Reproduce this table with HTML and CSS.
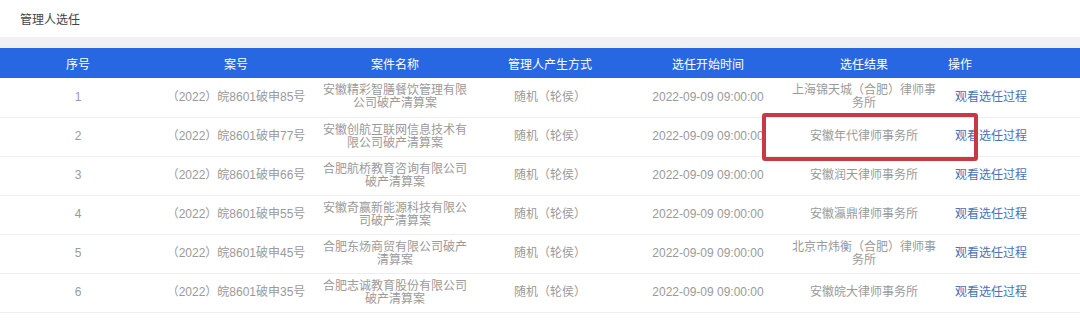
FILE: index.html
```html
<!DOCTYPE html>
<html lang="zh-CN">
<head>
<meta charset="utf-8">
<title>管理人选任</title>
<link rel="stylesheet" href="styles.css">
</head>
<body>
<div class="page">
  <div class="title-bar"><span class="title">管理人选任</span></div>
  <div class="band">
    <table class="grid">
      <colgroup>
        <col class="c1"><col class="c2"><col class="c3"><col class="c4"><col class="c5"><col class="c6"><col class="c7">
      </colgroup>
      <thead>
        <tr>
          <th>序号</th><th>案号</th><th>案件名称</th><th>管理人产生方式</th><th>选任开始时间</th><th>选任结果</th><th class="op">操作</th>
        </tr>
      </thead>
      <tbody>
        <tr>
          <td>1</td><td>（2022）皖8601破申85号</td><td class="name">安徽精彩智膳餐饮管理有限公司破产清算案</td><td>随机（轮侯）</td><td>2022-09-09 09:00:00</td><td class="res">上海锦天城（合肥）律师事务所</td><td class="op"><a href="#" class="link">观看选任过程</a></td>
        </tr>
        <tr>
          <td>2</td><td>（2022）皖8601破申77号</td><td class="name">安徽创航互联网信息技术有限公司破产清算案</td><td>随机（轮侯）</td><td>2022-09-09 09:00:00</td><td class="res">安徽年代律师事务所</td><td class="op"><a href="#" class="link">观看选任过程</a></td>
        </tr>
        <tr>
          <td>3</td><td>（2022）皖8601破申66号</td><td class="name">合肥航桥教育咨询有限公司破产清算案</td><td>随机（轮侯）</td><td>2022-09-09 09:00:00</td><td class="res">安徽润天律师事务所</td><td class="op"><a href="#" class="link">观看选任过程</a></td>
        </tr>
        <tr>
          <td>4</td><td>（2022）皖8601破申55号</td><td class="name">安徽奇赢新能源科技有限公司破产清算案</td><td>随机（轮侯）</td><td>2022-09-09 09:00:00</td><td class="res">安徽瀛鼎律师事务所</td><td class="op"><a href="#" class="link">观看选任过程</a></td>
        </tr>
        <tr>
          <td>5</td><td>（2022）皖8601破申45号</td><td class="name">合肥东炀商贸有限公司破产清算案</td><td>随机（轮侯）</td><td>2022-09-09 09:00:00</td><td class="res">北京市炜衡（合肥）律师事务所</td><td class="op"><a href="#" class="link">观看选任过程</a></td>
        </tr>
        <tr>
          <td>6</td><td>（2022）皖8601破申35号</td><td class="name">合肥志诚教育股份有限公司破产清算案</td><td>随机（轮侯）</td><td>2022-09-09 09:00:00</td><td class="res">安徽皖大律师事务所</td><td class="op"><a href="#" class="link">观看选任过程</a></td>
        </tr>
      </tbody>
    </table>
  </div>
  <div class="mark"></div>
</div>
</body>
</html>
```

FILE: styles.css
```css
* { box-sizing: border-box; }
html, body {
  margin: 0;
  padding: 0;
  background: #ffffff;
}
body {
  font-family: "Liberation Sans", "Noto Sans CJK SC", sans-serif;
  font-size: 12px;
  color: #9a9a9a;
}
.page {
  position: relative;
  width: 1080px;
  height: 326px;
  overflow: hidden;
}
.title-bar {
  height: 37px;
  display: flex;
  align-items: center;
  padding-left: 20px;
  padding-bottom: 1px;
}
.title {
  font-size: 12px;
  color: #444444;
}
.band {
  background: #f1f1f3;
  padding-top: 11px;
}
.grid {
  width: 1080px;
  table-layout: fixed;
  border-collapse: collapse;
  background: #ffffff;
}
.c1 { width: 156px; }
.c2 { width: 160px; }
.c3 { width: 158px; }
.c4 { width: 152px; }
.c5 { width: 164px; }
.c6 { width: 148px; }
.c7 { width: 142px; }
.grid th {
  height: 30px;
  background: #2768e2;
  color: #ffffff;
  font-weight: normal;
  font-size: 12px;
  text-align: center;
  padding: 0;
}
.grid td {
  height: 39px;
  border-bottom: 1px solid #eeeeee;
  text-align: center;
  line-height: 13px;
  padding: 0;
  white-space: nowrap;
}
.grid td.name {
  white-space: normal;
  padding: 0 6px;
}
.grid td.res {
  white-space: normal;
  padding: 0;
}
.grid th.op {
  text-align: left;
  padding-left: 10px;
}
.grid td.op {
  text-align: left;
  padding-left: 17px;
}
.link {
  color: #4a72b6;
  text-decoration: none;
  font-size: 12px;
}
.mark {
  position: absolute;
  left: 762px;
  top: 113px;
  width: 216px;
  height: 48px;
  border: 4px solid #c63a45;
  border-radius: 3px;
}
```
